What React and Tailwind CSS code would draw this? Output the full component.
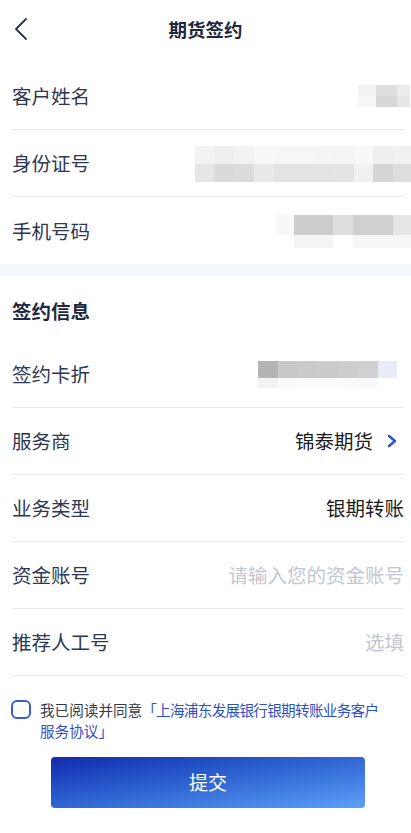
import React from "react";

const FONT = { fontFamily: '"Noto Sans CJK SC", "Noto Sans", sans-serif' };

function Mosaic({ top, bottom, topH, bottomH, widths }) {
  return (
    <div className="flex flex-col">
      <div className="flex">
        {top.map((c, i) => (
          <div key={i} style={{ background: c, width: widths[i], height: topH }} />
        ))}
      </div>
      <div className="flex">
        {bottom.map((c, i) => (
          <div key={i} style={{ background: c, width: widths[i], height: bottomH }} />
        ))}
      </div>
    </div>
  );
}

function Row({ label, children, border = true }) {
  return (
    <div className={`flex h-[67px] items-center justify-between ${border ? "border-b border-[#e6e9f1]" : ""}`}>
      <span className="text-[19.5px] text-[#2f3852]">{label}</span>
      {children}
    </div>
  );
}

export default function App() {
  return (
    <div className="w-[411px] h-[833px] bg-white overflow-hidden" style={FONT}>
      {/* header */}
      <div className="relative h-[63px] flex items-center justify-center">
        <svg className="absolute left-[12px] top-[17px]" width="18" height="24" viewBox="0 0 18 24" fill="none">
          <path d="M14 2 L4 12 L14 22" stroke="#2a3250" strokeWidth="1.8" strokeLinecap="round" strokeLinejoin="round" />
        </svg>
        <span className="text-[18.5px] font-bold text-[#1e2740] -mt-[3px]">期货签约</span>
      </div>

      <div className="ml-3 mr-[7px]">
        <Row label="客户姓名">
          <div className="-mr-[6px]">
            <Mosaic
              widths={[18, 21, 13]}
              top={["#f3f3f3", "#dedede", "#ececec"]}
              bottom={["#f6f6f6", "#d8d8d8", "#e6e6e6"]}
              topH={11}
              bottomH={11}
            />
          </div>
        </Row>
        <Row label="身份证号">
          <div className="-mr-[7px] mt-[1px]">
            <Mosaic
              widths={[19, 20, 20, 20, 20, 20, 20, 20, 19, 20, 18]}
              top={["#f3f3f3", "#eeeeee", "#f2f2f2", "#f7f7f7", "#f6f6f6", "#f6f6f6", "#f5f5f5", "#f4f4f4", "#f7f7f7", "#efefef", "#f1f1f1"]}
              bottom={["#e6e6e6", "#dadada", "#dcdcdc", "#e9e9e9", "#e3e3e3", "#e3e3e3", "#e3e3e3", "#e4e4e4", "#f1f1f1", "#d5d5d5", "#dedede"]}
              topH={18}
              bottomH={18}
            />
          </div>
        </Row>
        <Row label="手机号码" border={false}>
          <div className="-mr-[7px] mt-[1px]">
            <Mosaic
              widths={[19, 39, 20, 40, 18]}
              top={["#f8f8f8", "#cdcdcd", "#dedede", "#d0d0d0", "#e5e5e5"]}
              bottom={["#ffffff", "#f4f4f4", "#ffffff", "#f6f6f6", "#f6f6f6"]}
              topH={20}
              bottomH={13}
            />
          </div>
        </Row>
      </div>

      <div className="h-[12px] bg-[#f4f7fb]" />

      <div className="ml-3 mr-[7px]">
        <div className="h-[65px] flex items-center pt-[5px]">
          <span className="text-[19.5px] font-bold text-[#1f2840]">签约信息</span>
        </div>
        <Row label="签约卡折">
          <div className="mr-[7px]">
            <Mosaic
              widths={[20, 20, 20, 20, 20, 20, 19]}
              top={["#b4b4b4", "#c8c8c8", "#cacaca", "#cbcbcb", "#cdcdcd", "#d0d0d0", "#e9ecf8"]}
              bottom={["#f3f3f3", "#fafafa", "#fbfbfb", "#fbfbfb", "#fafafa", "#f8f8f8", "#ffffff"]}
              topH={17}
              bottomH={10}
            />
          </div>
        </Row>
        <Row label="服务商">
          <div className="flex items-center">
            <span className="text-[19.5px] text-[#1c1c1c]">锦泰期货</span>
            <svg className="ml-[13px] mr-[6px]" width="12" height="14" viewBox="0 0 12 14" fill="none">
              <path d="M3 2 L9 7 L3 12" stroke="#2a4fd8" strokeWidth="2.4" strokeLinecap="round" strokeLinejoin="round" />
            </svg>
          </div>
        </Row>
        <Row label="业务类型">
          <span className="text-[19.5px] text-[#1c1c1c]">银期转账</span>
        </Row>
        <Row label="资金账号">
          <span className="text-[19.5px] text-[#c3c6cf]">请输入您的资金账号</span>
        </Row>
        <Row label="推荐人工号">
          <span className="text-[19.5px] text-[#c3c6cf]">选填</span>
        </Row>
      </div>

      {/* agreement */}
      <div className="flex items-start pl-[11px] mt-[23px]">
        <div className="w-[20px] h-[19px] shrink-0 rounded-[6px] border-2 border-[#3b5bd4] mt-[1px]" />
        <p className="ml-[9px] text-[14.6px] leading-[21px] text-[#333a4d] whitespace-nowrap">
          我已阅读并同意<span className="text-[#2f50c8] tracking-[-0.7px]">「上海浦东发展银行银期转账业务客户</span>
          <br />
          <span className="text-[#2f50c8]">服务协议」</span>
        </p>
      </div>

      <button className="ml-[51px] mt-[16px] w-[314px] h-[51px] rounded-[4px] bg-gradient-to-br from-[#1427ae] to-[#5c9ff7] text-white text-[19px] flex items-center justify-center">
        提交
      </button>
    </div>
  );
}
